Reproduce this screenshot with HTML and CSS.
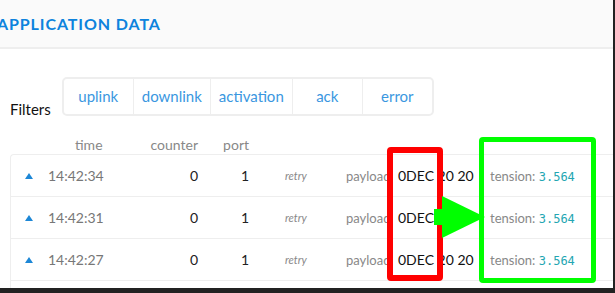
FILE: index.html
```html
<!DOCTYPE html>
<html lang="en">
<head>
    <meta charset="UTF-8">
    <title>Application Data</title>
    <link rel="stylesheet" href="styles.css">
</head>
<body>
    <div class="page">
        <div class="page-header">
            <h1 class="page-title">Application Data</h1>
        </div>

        <div class="filters">
            <span class="filters-label">Filters</span>
            <div class="filter-group">
                <a class="filter-btn">uplink</a>
                <a class="filter-btn">downlink</a>
                <a class="filter-btn">activation</a>
                <a class="filter-btn">ack</a>
                <a class="filter-btn">error</a>
            </div>
        </div>

        <div class="data">
            <div class="data-head">
                <span></span>
                <span class="head-time">time</span>
                <span class="num">counter</span>
                <span class="num">port</span>
            </div>

            <div class="data-table">
                <div class="data-row">
                    <span class="up"></span>
                    <span class="time">14:42:34</span>
                    <span class="num">0</span>
                    <span class="num">1</span>
                    <span class="retry">retry</span>
                    <span class="label">payload</span>
                    <span class="hex">0DEC 20 20</span>
                    <span class="label">tension: <code class="value">3.564</code></span>
                </div>
                <div class="data-row">
                    <span class="up"></span>
                    <span class="time">14:42:31</span>
                    <span class="num">0</span>
                    <span class="num">1</span>
                    <span class="retry">retry</span>
                    <span class="label">payload</span>
                    <span class="hex">0DEC 20 20</span>
                    <span class="label">tension: <code class="value">3.564</code></span>
                </div>
                <div class="data-row">
                    <span class="up"></span>
                    <span class="time">14:42:27</span>
                    <span class="num">0</span>
                    <span class="num">1</span>
                    <span class="retry">retry</span>
                    <span class="label">payload</span>
                    <span class="hex">0DEC 20 20</span>
                    <span class="label">tension: <code class="value">3.564</code></span>
                </div>
                <div class="data-row"></div>
            </div>
        </div>

        <!-- annotations drawn over the screenshot -->
        <div class="mark mark-red"></div>
        <div class="mark mark-green"></div>
        <svg class="mark-arrow" width="52" height="44" viewBox="0 0 52 44">
            <rect x="0" y="13" width="10" height="16" fill="#00ff00"/>
            <polygon points="8,0 51,21 8,42" fill="#00ff00"/>
        </svg>
    </div>
</body>
</html>
```

FILE: styles.css
```css
* {
    margin: 0;
    padding: 0;
    box-sizing: border-box;
}

body {
    width: 615px;
    height: 293px;
    overflow: hidden;
    background: #222;
    font-family: Lato, 'Open Sans', sans-serif;
    font-size: 14px;
    color: #222;
}

.page {
    position: relative;
    width: 613px;
    height: 288px;
    overflow: hidden;
    background: white;
}

.page-header {
    height: 49px;
    background: #fafafa;
    border-bottom: 2px solid #eee;
    padding-top: 14px;
}

.page-title {
    margin-left: -3px;
    font-size: 16px;
    font-weight: 700;
    line-height: 20px;
    letter-spacing: 0.9px;
    text-transform: uppercase;
    color: #0d83dd;
}

.filters {
    display: flex;
    align-items: flex-end;
    gap: 11px;
    margin-top: 28px;
    padding-left: 10px;
}

.filters-label {
    font-size: 15px;
    line-height: 14px;
    color: #111;
}

.filter-group {
    display: flex;
    height: 39px;
    border: 2px solid #eee;
    border-radius: 5px;
    font-size: 15px;
}

.filter-btn {
    display: flex;
    align-items: center;
    justify-content: center;
    min-width: 70px;
    padding: 0 8px 2px;
    color: #3a97df;
    border-left: 1px solid #eee;
}

.filter-btn:first-child {
    min-width: 69px;
    border-left: none;
}

.data {
    margin-top: 18px;
    margin-left: 10px;
}

.data-head,
.data-row {
    display: grid;
    grid-template-columns: 23px 100px 50px 51px 97px 52px 92px auto;
    align-items: center;
    padding-left: 14px;
}

.data-head {
    height: 20px;
    color: #888;
    padding-left: 15px;
}

.head-time {
    padding-left: 27px;
}

.num {
    text-align: right;
}

.data-table {
    border-top: 1px solid #eee;
    border-left: 1px solid #eee;
    border-top-left-radius: 4px;
}

.data-row {
    height: 42px;
    border-bottom: 1px solid #eee;
}

.up {
    width: 0;
    height: 0;
    border-left: 4px solid transparent;
    border-right: 4px solid transparent;
    border-bottom: 6px solid #1d87d6;
}

.time {
    color: #777;
}

.retry {
    padding-left: 36px;
    font-size: 11px;
    font-style: italic;
    color: #888;
}

.label {
    font-size: 13px;
    color: #888;
}

.hex {
    color: #111;
}

.value {
    font-family: 'DejaVu Sans Mono', 'Liberation Mono', monospace;
    font-size: 12px;
    color: #23a6b2;
}

.mark {
    position: absolute;
    border-radius: 4px;
}

.mark-red {
    left: 387px;
    top: 147px;
    width: 56px;
    height: 134px;
    border: 6px solid #ff0000;
}

.mark-green {
    left: 479px;
    top: 137px;
    width: 117px;
    height: 146px;
    border: 5px solid #00ff00;
}

.mark-arrow {
    position: absolute;
    left: 434px;
    top: 196px;
}
```
